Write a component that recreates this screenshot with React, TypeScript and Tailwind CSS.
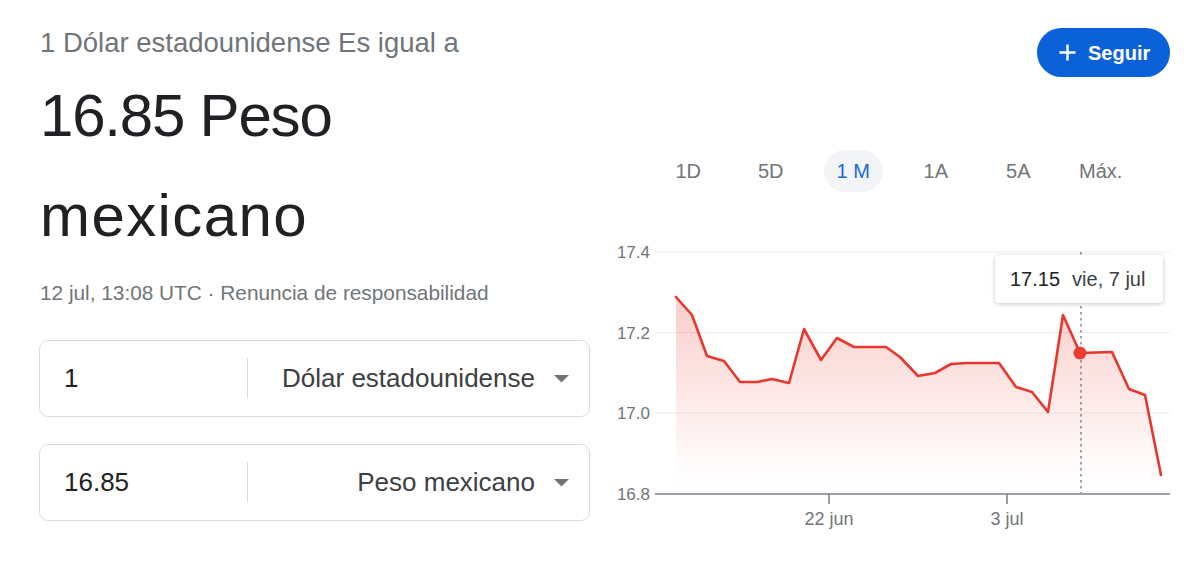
import React from "react";

const pts: [number, number][] = [
  [76, 57], [92, 75], [107, 116], [124, 121], [140, 142], [157, 142], [172, 139], [189, 143],
  [204, 89], [221, 120], [237, 98], [254, 107], [286, 107], [300, 117], [318, 136], [335, 133],
  [351, 124], [367, 123], [399, 123], [416, 147], [432, 152], [448, 172], [463, 75], [480, 113],
  [512, 112], [529, 149], [545, 155], [561, 235],
];

function Chart() {
  const line = pts.map((p, i) => `${i === 0 ? "M" : "L"}${p[0]},${p[1]}`).join(" ");
  const area = `${line} L561,254 L76,254 Z`;
  const grid = [
    { y: 12, l: "17.4" },
    { y: 92.5, l: "17.2" },
    { y: 173, l: "17.0" },
  ];
  return (
    <div className="relative mt-[48px] h-[300px] w-[570px]">
      <svg width="570" height="300" viewBox="0 0 570 300" className="block">
        <defs>
          <linearGradient id="fillg" x1="0" y1="57" x2="0" y2="254" gradientUnits="userSpaceOnUse">
            <stop offset="0" stopColor="#ea4335" stopOpacity="0.26" />
            <stop offset="0.85" stopColor="#ea4335" stopOpacity="0.02" />
            <stop offset="1" stopColor="#ea4335" stopOpacity="0" />
          </linearGradient>
        </defs>
        {grid.map((g) => (
          <g key={g.l}>
            <line x1="55" x2="570" y1={g.y} y2={g.y} stroke="#ececec" strokeWidth="1" />
            <text x="50" y={g.y + 6} textAnchor="end" fontSize="17" fill="#70757a" fontFamily="'Liberation Sans', Arial, sans-serif">
              {g.l}
            </text>
          </g>
        ))}
        <path d={area} fill="url(#fillg)" />
        <path d={line} fill="none" stroke="#e8372c" strokeWidth="2.6" strokeLinejoin="round" strokeLinecap="round" />
        <line x1="481" x2="481" y1="12" y2="254" stroke="#70757a" strokeWidth="1.3" strokeDasharray="2.5 3.5" />
        <circle cx="480" cy="113" r="6.5" fill="#ea3b30" />
        <line x1="55" x2="570" y1="254" y2="254" stroke="#9aa0a6" strokeWidth="2" />
        <line x1="229" x2="229" y1="254" y2="264" stroke="#80868b" strokeWidth="1.6" />
        <line x1="407" x2="407" y1="254" y2="264" stroke="#80868b" strokeWidth="1.6" />
        <text x="50" y="260" textAnchor="end" fontSize="17" fill="#70757a" fontFamily="'Liberation Sans', Arial, sans-serif">
          16.8
        </text>
        <text x="229" y="285" textAnchor="middle" fontSize="18" fill="#70757a" fontFamily="'Liberation Sans', Arial, sans-serif">
          22 jun
        </text>
        <text x="407" y="285" textAnchor="middle" fontSize="18" fill="#70757a" fontFamily="'Liberation Sans', Arial, sans-serif">
          3 jul
        </text>
      </svg>
      <div className="absolute left-[395px] top-[15px] flex h-[48px] w-[168px] items-center rounded-[4px] bg-white pl-[15px] text-[20px] text-[#202124] shadow-[0_1px_4px_rgba(60,64,67,0.3)]">
        <span className="text-[#202124]">17.15</span>
        <span className="ml-[12px] text-[#3c4043]">vie, 7 jul</span>
      </div>
    </div>
  );
}

function Caret() {
  return (
    <svg width="15" height="8" viewBox="0 0 15 8" className="ml-[19px] shrink-0">
      <polygon points="0,0 15,0 7.5,7.5" fill="#70757a" />
    </svg>
  );
}

function ConvBox({ value, unit, className }: { value: string; unit: string; className?: string }) {
  return (
    <div className={`flex h-[77px] w-[551px] items-center rounded-[9px] border border-[#dadce0] ${className ?? ""}`}>
      <div className="w-[207px] pl-[24px] text-[26px] text-[#202124]">{value}</div>
      <div className="h-[41px] w-px bg-[#dadce0]" />
      <div className="flex flex-1 items-center justify-end pr-[20px] text-[26px] text-[#3c4043]">
        <span>{unit}</span>
        <Caret />
      </div>
    </div>
  );
}

export default function App() {
  const tabs = ["1D", "5D", "1 M", "1A", "5A", "Máx."];
  return (
    <div
      className="flex h-[569px] w-[1200px] bg-white"
      style={{ fontFamily: "'Liberation Sans', Arial, Helvetica, sans-serif" }}
    >
      <div className="ml-[39px] w-[551px] pt-[27px]">
        <div className="ml-[1px] whitespace-nowrap text-[27.5px] leading-[32px] text-[#70757a]">
          1 Dólar estadounidense Es igual a
        </div>
        <div className="ml-[1px] mt-[7px] text-[60px] leading-[100px] text-[#202124]">
          <span className="tracking-[-1.2px]">16.85 Peso</span>
          <br />
          <span className="tracking-[1.4px]">mexicano</span>
        </div>
        <div className="ml-[1px] mt-[15px] whitespace-nowrap text-[20.8px] leading-[24px] text-[#70757a]">
          12 jul, 13:08 UTC · Renuncia de responsabilidad
        </div>
        <ConvBox value="1" unit="Dólar estadounidense" className="mt-[35px]" />
        <ConvBox value="16.85" unit="Peso mexicano" className="mt-[27px]" />
      </div>
      <div className="ml-[10px] flex w-[570px] flex-col pt-[28px]">
        <button className="flex h-[49px] w-[133px] items-center self-end rounded-full bg-[#0b62d8] pl-[21px] text-white">
          <svg width="19" height="19" viewBox="0 0 19 19">
            <path d="M9.5 1.5v16M1.5 9.5h16" stroke="white" strokeWidth="2.4" />
          </svg>
          <span className="ml-[11px] text-[20px] font-bold leading-none">Seguir</span>
        </button>
        <div className="mt-[73px] flex h-[42px] items-center pl-[47px]">
          {tabs.map((t) => (
            <div key={t} className="flex w-[82.5px] justify-center">
              {t === "1 M" ? (
                <span className="flex h-[42px] w-[59px] items-center justify-center rounded-full bg-[#f2f4f8] text-[20px] text-[#1a67d8]">
                  {t}
                </span>
              ) : (
                <span className="text-[20px] text-[#70757a]">{t}</span>
              )}
            </div>
          ))}
        </div>
        <Chart />
      </div>
    </div>
  );
}
